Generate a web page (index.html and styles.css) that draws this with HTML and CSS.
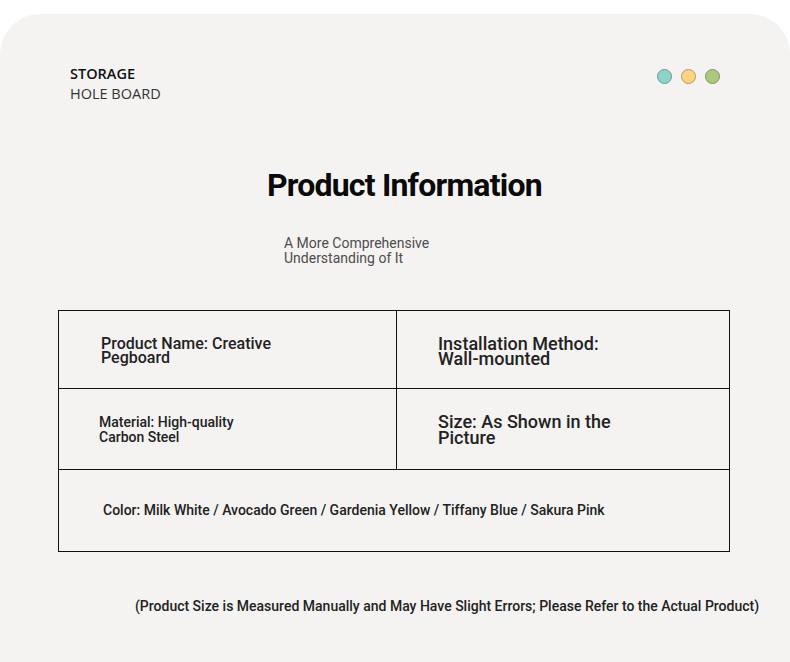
FILE: index.html
```html
<!DOCTYPE html>
<html>
<head>
<meta charset="utf-8">
<link rel="stylesheet" href="styles.css">
</head>
<body>
<div class="card">
  <header class="top">
    <div class="brand">
      <div class="brand-1">STORAGE</div>
      <div class="brand-2">HOLE BOARD</div>
    </div>
    <div class="dots">
      <span class="dot teal"></span>
      <span class="dot yellow"></span>
      <span class="dot green"></span>
    </div>
  </header>
  <h1 class="title">Product Information</h1>
  <p class="subtitle">A More Comprehensive<br>Understanding of It</p>
  <div class="table">
    <div class="cell c1"><span class="t-name">Product Name: Creative<br>Pegboard</span></div>
    <div class="cell c2"><span class="t-inst">Installation Method:<br>Wall-mounted</span></div>
    <div class="cell c3"><span class="t-mat">Material: High-quality<br>Carbon Steel</span></div>
    <div class="cell c4"><span class="t-size">Size: As Shown in the<br>Picture</span></div>
    <div class="cell c5"><span class="t-color">Color: Milk White / Avocado Green / Gardenia Yellow / Tiffany Blue / Sakura Pink</span></div>
  </div>
  <p class="note">(Product Size is Measured Manually and May Have Slight Errors; Please Refer to the Actual Product)</p>
</div>
</body>
</html>
```

FILE: styles.css
```css
html, body {
  margin: 0;
  padding: 0;
  background: #ffffff;
}
body {
  width: 790px;
  height: 662px;
  overflow: hidden;
  font-family: Roboto, "Liberation Sans", sans-serif;
}
.card {
  margin-top: 14px;
  height: 648px;
  background: #f4f3f1;
  border-radius: 40px 40px 0 0;
  box-sizing: border-box;
  padding: 0 0 0 58px;
}
.top {
  display: flex;
  justify-content: space-between;
  align-items: flex-start;
  padding: 50px 70px 0 12px;
}
.brand {
  font-family: "Open Sans", sans-serif;
  font-size: 14.5px;
  line-height: 20px;
}
.brand-1 {
  font-weight: 600;
  color: #111;
}
.brand-2 {
  color: #333;
}
.dots {
  display: flex;
  gap: 9px;
  margin-top: 5px;
}
.dot {
  width: 13px;
  height: 13px;
  border-radius: 50%;
  border: 1px solid #7d8a80;
}
.teal { background: #8ed4c6; border-color: #6a9a92; }
.yellow { background: #fcd47f; border-color: #b4986a; }
.green { background: #abc97c; border-color: #7e9466; }
.title {
  margin: 64px 0 0 0;
  padding-left: 209px;
  font-size: 32px;
  letter-spacing: -0.8px;
  font-weight: 700;
  line-height: 34px;
  color: #0a0a0a;
}
.subtitle {
  margin: 34px 0 0 226px;
  font-size: 14px;
  line-height: 15px;
  color: #4d4d4d;
}
.table {
  margin-top: 44px;
  width: 672px;
  box-sizing: border-box;
  display: grid;
  grid-template-columns: 338px 1fr;
  grid-template-rows: 78px 81px 81px;
  border: 1px solid #111;
}
.cell {
  box-sizing: border-box;
  display: flex;
  align-items: center;
  color: #222;
}
.c1, .c3 { border-right: 1px solid #111; }
.c1, .c2 { border-bottom: 1px solid #111; }
.c3, .c4 { border-bottom: 1px solid #111; }
.c5 { grid-column: 1 / span 2; }
.c1 { padding: 3px 0 0 42px; }
.c2 { padding: 3px 0 0 41px; }
.c3 { padding: 1px 0 0 40px; }
.c4 { padding: 1px 0 0 41px; }
.c5 { padding: 0 0 1px 44px; }
.t-name {
  font-size: 16px;
  line-height: 14px;
  font-weight: 500;
}
.t-inst {
  font-size: 18px;
  line-height: 15px;
  font-weight: 500;
}
.t-mat {
  font-size: 14px;
  line-height: 15px;
  font-weight: 500;
}
.t-size {
  font-size: 18px;
  line-height: 16px;
  font-weight: 500;
}
.t-color {
  font-size: 14px;
  font-weight: 500;
  line-height: 16px;
}
.note {
  margin: 46px 0 0 77px;
  font-size: 14px;
  font-weight: 500;
  color: #222;
  white-space: nowrap;
}
```
